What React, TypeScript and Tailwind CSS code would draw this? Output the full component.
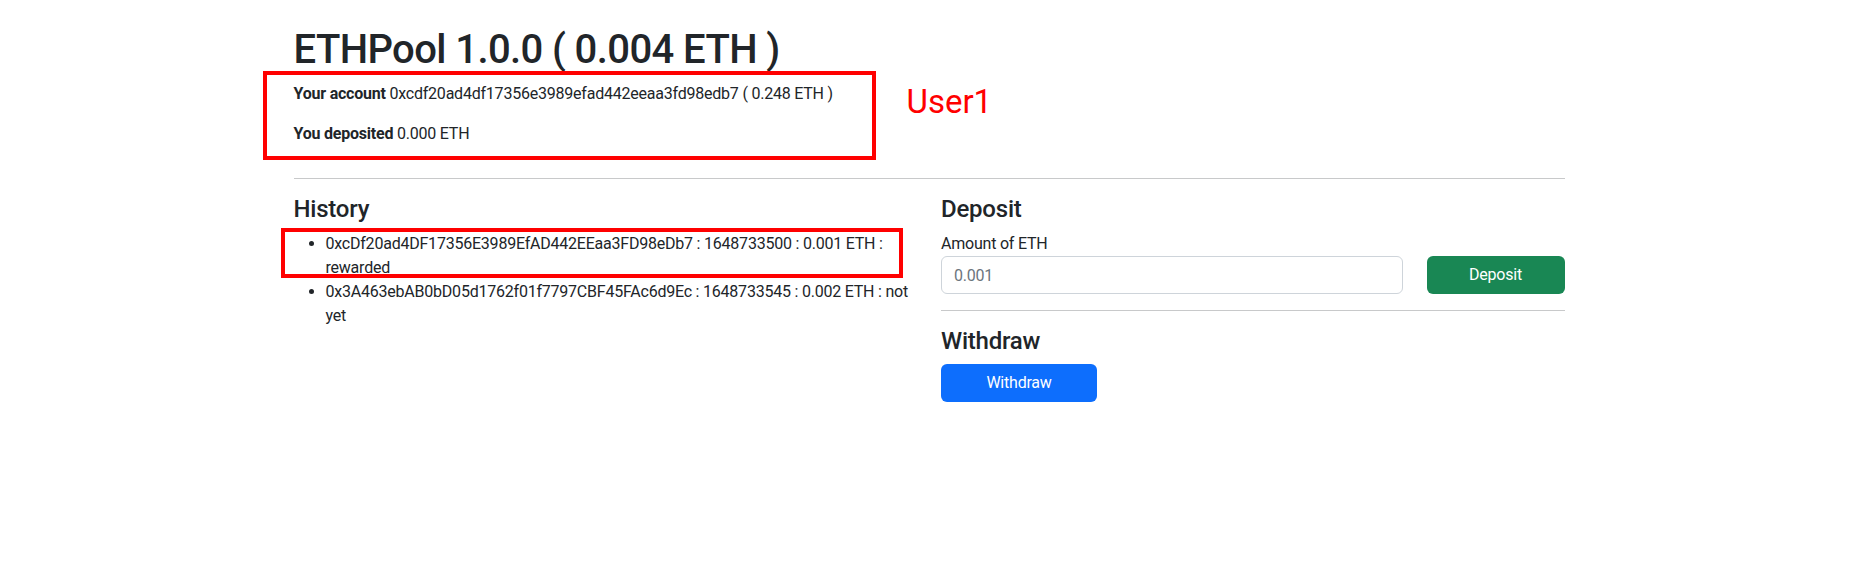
import { useState } from 'react';

const HISTORY = [
  {
    address: '0xcDf20ad4DF17356E3989EfAD442EEaa3FD98eDb7',
    time: '1648733500',
    amount: '0.001',
    status: 'rewarded',
  },
  {
    address: '0x3A463ebAB0bD05d1762f01f7797CBF45FAc6d9Ec',
    time: '1648733545',
    amount: '0.002',
    status: 'not yet',
  },
];

export default function App() {
  const [amount, setAmount] = useState('');

  return (
    <div className="min-h-[565px] bg-white font-['Roboto','Noto_Sans',sans-serif] text-base leading-6 tracking-[-0.22px] text-[#212529]">
      <div className="relative mx-auto w-[1271px] pt-[26px]">
        <h1 className="mb-2 text-[40px] font-medium leading-[48px] tracking-[-0.6px]">ETHPool 1.0.0 ( 0.004 ETH )</h1>
        <p className="mb-4">
          <b className="font-bold">Your account</b> 0xcdf20ad4df17356e3989efad442eeaa3fd98edb7 ( 0.248 ETH )
        </p>
        <p>
          <b className="font-bold">You deposited</b> 0.000 ETH
        </p>
        <hr className="mt-8 mb-4 border-t border-[#c8c9ca]" />

        <div className="grid grid-cols-2 gap-x-6">
          <div>
            <h4 className="mb-2 text-2xl font-medium leading-[29px]">History</h4>
            <ul className="list-disc pl-8">
              {HISTORY.map((h) => (
                <li key={h.address}>
                  {h.address} : {h.time} : {h.amount} ETH : {h.status}
                </li>
              ))}
            </ul>
          </div>

          <div>
            <h4 className="mb-2 text-2xl font-medium leading-[29px]">Deposit</h4>
            <label className="block">Amount of ETH</label>
            <div className="flex gap-6">
              <input
                value={amount}
                onChange={(e) => setAmount(e.target.value)}
                placeholder="0.001"
                className="h-[38px] flex-1 rounded-md border border-[#ced4da] px-3 text-base text-[#212529] outline-none placeholder:text-[#6c757d]"
              />
              <button type="button" className="h-[38px] w-[138px] rounded-md bg-[#198754] text-white">
                Deposit
              </button>
            </div>
            <hr className="my-4 border-t border-[#c8c9ca]" />
            <h4 className="mb-2 text-2xl font-medium leading-[29px]">Withdraw</h4>
            <button type="button" className="h-[38px] w-[156px] rounded-md bg-[#0d6efd] text-white">
              Withdraw
            </button>
          </div>
        </div>

        {/* annotation overlays */}
        <div className="pointer-events-none absolute left-[-31px] top-[71px] h-[89px] w-[613px] border-4 border-[#ff0000]" />
        <div className="pointer-events-none absolute left-[-13px] top-[228px] h-[50px] w-[622px] border-4 border-[#ff0000]" />
        <div className="absolute left-[613px] top-[82px] text-[33px] leading-[40px] tracking-normal text-[#ff0000]">User1</div>
      </div>
    </div>
  );
}
